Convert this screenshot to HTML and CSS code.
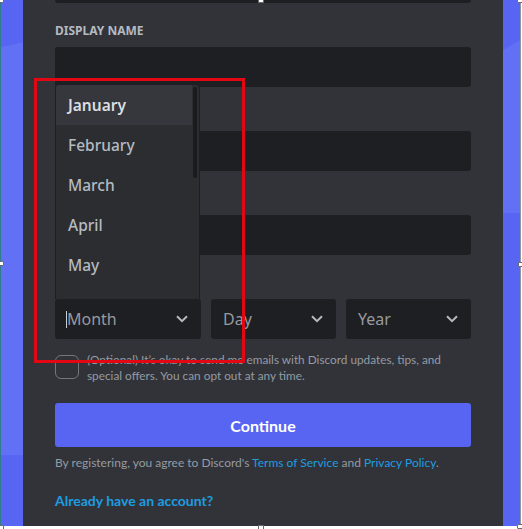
FILE: index.html
```html
<!DOCTYPE html>
<html lang="en">
<head>
<meta charset="utf-8">
<title>Create an account</title>
<link rel="stylesheet" href="styles.css">
</head>
<body>
<div class="stage">
  <div class="bg-light bg-left"></div>
  <div class="bg-light bg-right"></div>
  <main class="card">
    <div class="stub"></div>
    <div class="field">
      <label class="label">Display Name</label>
      <div class="input"></div>
    </div>
    <div class="field">
      <label class="label">Username</label>
      <div class="input"></div>
    </div>
    <div class="field">
      <label class="label">Password</label>
      <div class="input"></div>
    </div>
    <div class="field">
      <label class="label">Date of Birth</label>
      <div class="date-row">
        <div class="select">
          <span class="caret"></span>
          <span class="placeholder">Month</span>
          <svg class="chev" viewBox="0 0 12 8" width="12" height="8"><path d="M1 1.2L6 6.2L11 1.2" fill="none" stroke="currentColor" stroke-width="2"/></svg>
          <div class="menu">
            <div class="item active">January</div>
            <div class="item">February</div>
            <div class="item">March</div>
            <div class="item">April</div>
            <div class="item">May</div>
            <div class="item">June</div>
            <div class="scroll-thumb"></div>
          </div>
        </div>
        <div class="select">
          <span class="placeholder">Day</span>
          <svg class="chev" viewBox="0 0 12 8" width="12" height="8"><path d="M1 1.2L6 6.2L11 1.2" fill="none" stroke="currentColor" stroke-width="2"/></svg>
        </div>
        <div class="select">
          <span class="placeholder">Year</span>
          <svg class="chev" viewBox="0 0 12 8" width="12" height="8"><path d="M1 1.2L6 6.2L11 1.2" fill="none" stroke="currentColor" stroke-width="2"/></svg>
        </div>
      </div>
    </div>
    <div class="check-row">
      <span class="checkbox"></span>
      <p class="check-text">(Optional) It’s okay to send me emails with Discord updates, tips, and special offers. You can opt out at any time.</p>
    </div>
    <button class="continue">Continue</button>
    <p class="terms">By registering, you agree to Discord's <a class="link">Terms of Service</a> and <a class="link">Privacy Policy</a>.</p>
    <a class="login link">Already have an account?</a>
  </main>
  <div class="annot"></div>
</div>
<span class="handle h-tl"></span>
<span class="handle h-tc"></span>
<span class="handle h-tr"></span>
<span class="handle h-ml"></span>
<span class="handle h-mr"></span>
<span class="handle h-bl"></span>
<span class="handle h-bc"></span>
<span class="handle h-br"></span>
</body>
</html>
```

FILE: styles.css
```css
html, body {
  margin: 0;
  padding: 0;
}
body {
  width: 522px;
  height: 529px;
  overflow: hidden;
  background: #ffffff;
  position: relative;
  font-family: Lato, "Noto Sans", sans-serif;
}
.stage {
  position: relative;
  height: 526px;
  width: 497px;
  background: #5865f2;
  border-left: 1px solid #2f7d8c;
  border-right: 1px solid #8d9b9d;
  padding-left: 22px;
  box-sizing: content-box;
  display: flex;
  overflow: hidden;
}
.bg-light {
  position: absolute;
  background: #6270f6;
}
.bg-left {
  left: 0;
  top: 42px;
  width: 24px;
  height: 413px;
  clip-path: polygon(0 5px, 100% 0, 100% 100%, 0 100%);
}
.bg-right {
  right: 0;
  top: 40px;
  width: 20px;
  height: 173px;
  clip-path: polygon(0 12px, 100% 0, 100% 100%, 0 100%);
}
.card {
  position: relative;
  z-index: 1;
  width: 480px;
  height: 100%;
  background: #313338;
  padding: 0 32px;
  box-sizing: border-box;
  display: flex;
  flex-direction: column;
}
.stub {
  height: 3px;
  background: #1e1f22;
  border-radius: 0 0 3px 3px;
}
.field {
  margin-top: 20px;
  display: flex;
  flex-direction: column;
}
.label {
  font-family: "Noto Sans", sans-serif;
  font-size: 12px;
  line-height: 16px;
  font-weight: 700;
  text-transform: uppercase;
  letter-spacing: 0;
  color: #b5bac1;
  margin-bottom: 8px;
}
.input {
  height: 40px;
  background: #1e1f22;
  border-radius: 3px;
}
.date-row {
  display: grid;
  grid-template-columns: 146fr 125fr 125fr;
  gap: 10px;
}
.select {
  position: relative;
  height: 40px;
  background: #1e1f22;
  border-radius: 3px;
  display: flex;
  align-items: center;
  padding: 0 13px 0 12px;
  box-sizing: border-box;
  color: #b5bac1;
}
.placeholder {
  flex: 1;
  font-family: "Noto Sans", sans-serif;
  font-size: 16px;
  color: #979a9f;
}
.caret {
  position: absolute;
  left: 11px;
  top: 12px;
  width: 1px;
  height: 17px;
  background: #c9ccd0;
}
.chev {
  display: block;
  color: #b5bac1;
}
.menu {
  position: absolute;
  left: 0;
  right: 1px;
  bottom: 100%;
  height: 215px;
  background: #2b2d31;
  border: 1px solid #1e1f22;
  border-bottom: none;
  border-radius: 4px 4px 0 0;
  box-sizing: border-box;
  overflow: hidden;
  z-index: 5;
}
.item {
  height: 40px;
  margin-right: 7px;
  padding-left: 12px;
  display: flex;
  align-items: center;
  font-family: "Noto Sans", sans-serif;
  font-size: 15.5px;
  font-weight: 500;
  color: #b5bac1;
}
.item.active {
  background: #35373c;
  color: #dbdee1;
  font-weight: 600;
}
.scroll-thumb {
  position: absolute;
  right: 2px;
  top: 2px;
  width: 4px;
  height: 91px;
  border-radius: 2px;
  background: #1a1b1e;
}
.check-row {
  margin-top: 16px;
  display: flex;
  gap: 8px;
  align-items: flex-start;
}
.checkbox {
  flex: none;
  width: 24px;
  height: 24px;
  box-sizing: border-box;
  border: 1px solid #72767d;
  border-radius: 6px;
}
.check-text {
  margin: -3px 0 0;
  font-size: 11.8px;
  line-height: 16px;
  color: #949ba4;
}
.continue {
  margin-top: 19px;
  height: 44px;
  border: none;
  border-radius: 3px;
  background: #5865f2;
  color: #ffffff;
  font-family: Lato, sans-serif;
  font-size: 16px;
  font-weight: 700;
}
.terms {
  margin: 8px 0 0;
  font-size: 12px;
  line-height: 16px;
  color: #949ba4;
}
.link {
  color: #1e9de0;
}
.login {
  margin-top: 20px;
  font-size: 14px;
  line-height: 20px;
  font-weight: 700;
  align-self: flex-start;
}
.annot {
  position: absolute;
  left: 33px;
  top: 78px;
  width: 211px;
  height: 285px;
  border: 3px solid #e30613;
  box-sizing: border-box;
  z-index: 10;
}
.handle {
  position: absolute;
  width: 4px;
  height: 3px;
  background: #ffffff;
  border: 1px solid #6b6b6b;
  border-radius: 1px;
  z-index: 20;
}
.h-tl { left: -2px; top: -2px; }
.h-tc { left: 258px; top: -2px; }
.h-tr { left: 517px; top: -2px; }
.h-ml { left: -2px; top: 261px; }
.h-mr { left: 518px; top: 262px; }
.h-bl { left: -2px; top: 525px; }
.h-bc { left: 258px; top: 525px; }
.h-br { left: 517px; top: 524px; }
```
